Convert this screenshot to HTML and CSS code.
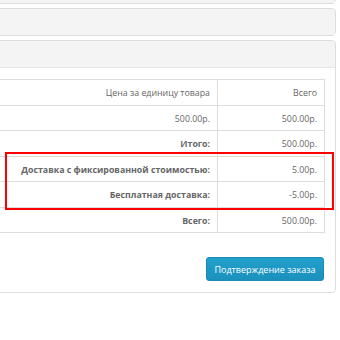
FILE: index.html
```html
<!DOCTYPE html>
<html lang="ru">
<head>
    <meta charset="UTF-8">
    <meta name="viewport" content="width=device-width, initial-scale=1.0">
    <title>Оформление заказа</title>
    <link rel="stylesheet" href="styles.css">
</head>
<body>

<div class="page">
    <div class="panel panel-first">
        <div class="panel-heading"></div>
    </div>
    <div class="panel">
        <div class="panel-heading"></div>
    </div>
    <div class="panel">
        <div class="panel-heading"></div>
        <div class="panel-body">
            <div class="table-wrap">
                <table class="cart">
                    <tr>
                        <td>Цена за единицу товара</td>
                        <td class="total">Всего</td>
                    </tr>
                    <tr>
                        <td>500.00р.</td>
                        <td class="total">500.00р.</td>
                    </tr>
                    <tr>
                        <td><strong>Итого:</strong></td>
                        <td class="total">500.00р.</td>
                    </tr>
                    <tr>
                        <td><strong>Доставка с фиксированной стоимостью:</strong></td>
                        <td class="total">5.00р.</td>
                    </tr>
                    <tr>
                        <td><strong>Бесплатная доставка:</strong></td>
                        <td class="total">-5.00р.</td>
                    </tr>
                    <tr>
                        <td><strong>Всего:</strong></td>
                        <td class="total">500.00р.</td>
                    </tr>
                </table>
                <div class="mark"></div>
            </div>
            <div class="buttons">
                <button class="btn-primary">Подтверждение заказа</button>
            </div>
        </div>
    </div>
</div>

</body>
</html>
```

FILE: styles.css
```css
* {
    margin: 0;
    padding: 0;
    box-sizing: border-box;
}

body {
    font-family: 'Open Sans', 'Noto Sans', sans-serif;
    font-size: 8.8px;
    color: #666;
    background-color: #fff;
    overflow: hidden;
}

.page {
    margin-left: -200px;
    width: 536px;
}

.panel {
    border: 1px solid #ddd;
    border-radius: 4px;
    margin-top: 4px;
    background-color: #fff;
}

.panel-first {
    margin-top: -24px;
}

.panel-heading {
    height: 26px;
    background-color: #f4f4f4;
    border-radius: 3px 3px 0 0;
}

.panel-body {
    border-top: 1px solid #e6e6e6;
    padding: 11px 10px 11px 10px;
}

.table-wrap {
    position: relative;
}

.cart {
    width: 100%;
    border-collapse: collapse;
}

.cart td {
    border: 1px solid #ddd;
    padding: 5px 7px 3px 8px;
    line-height: 16.5px;
    text-align: right;
}

.cart td.total {
    width: 107px;
}

.cart strong {
    font-weight: bold;
}

/* red frame over shipping rows */
.mark {
    position: absolute;
    top: 73px;
    left: 194px;
    right: -9px;
    height: 58px;
    border: 2px solid #f00;
}

.buttons {
    display: flex;
    justify-content: flex-end;
    margin-top: 24px;
    padding-right: 1px;
}

.btn-primary {
    font-family: 'Open Sans', 'Noto Sans', sans-serif;
    font-size: 9px;
    color: #fff;
    background-color: #1e98c6;
    background-image: linear-gradient(to bottom, #22a0cc, #1b90bd);
    border: 1px solid #1a8bb6;
    border-radius: 3px;
    height: 24px;
    width: 118px;
    cursor: pointer;
}
```
